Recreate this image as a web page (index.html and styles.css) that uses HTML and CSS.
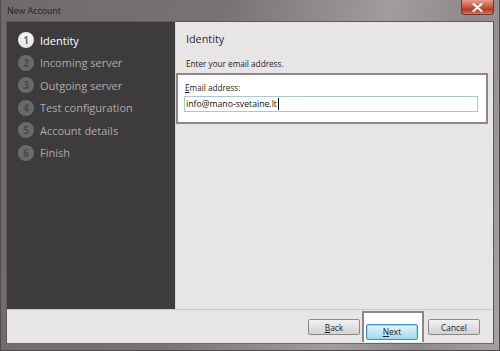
FILE: index.html
```html
<!DOCTYPE html>
<html lang="en">
<head>
<meta charset="UTF-8" />
<title>New Account</title>
<link rel="stylesheet" href="styles.css">
</head>
<body>

<div class="window">
  <div class="titlebar">
    <span class="title">New Account</span>
    <div class="close">
      <svg width="11" height="9" viewBox="0 0 11 9"><path d="M1.5 1 L9.5 8 M9.5 1 L1.5 8" stroke="#fff" stroke-width="2.2" stroke-linecap="round"/></svg>
    </div>
  </div>

  <div class="client">
    <div class="main">
      <ul class="steps">
        <li class="step current"><span class="num">1</span>Identity</li>
        <li class="step"><span class="num">2</span>Incoming server</li>
        <li class="step"><span class="num">3</span>Outgoing server</li>
        <li class="step"><span class="num">4</span>Test configuration</li>
        <li class="step"><span class="num">5</span>Account details</li>
        <li class="step"><span class="num">6</span>Finish</li>
      </ul>

      <div class="page">
        <h2>Identity</h2>
        <p class="hint">Enter your email address.</p>
        <div class="highlight">
          <label class="field-label"><u>E</u>mail address:</label>
          <div class="input">info@mano-svetaine.lt<span class="caret"></span></div>
        </div>
      </div>
    </div>

    <div class="footer">
      <button class="btn"><u>B</u>ack</button>
      <div class="btn-highlight">
        <button class="btn primary"><u>N</u>ext</button>
      </div>
      <button class="btn">Cancel</button>
    </div>
  </div>
</div>

</body>
</html>
```

FILE: styles.css
```css
body {
  margin: 0;
  font-family: "Open Sans", "Noto Sans", sans-serif;
}

.window {
  width: 500px;
  height: 351px;
  box-sizing: border-box;
  padding: 0 5px 6px 5px;
  display: flex;
  flex-direction: column;
  background: linear-gradient(100deg, #6f6b6c 0%, #777374 40%, #a19c9d 70%, #8d8889 85%, #a6a1a2 100%);
  border: 1px solid #4f4b4c;
  border-top: none;
}

.titlebar {
  height: 21px;
  display: flex;
  align-items: flex-start;
}

.title {
  font-size: 8.8px;
  color: #1f1d1e;
  margin: 5px 0 0 1px;
}

.close {
  margin-left: auto;
  width: 33px;
  height: 15px;
  border: 1px solid #6b3a33;
  border-top: none;
  border-radius: 0 0 4px 4px;
  background: linear-gradient(#e69d8c, #c8553f 50%, #b23a24 70%, #d87a5e);
  display: flex;
  align-items: center;
  justify-content: center;
  box-sizing: border-box;
}

.client {
  flex: 1;
  display: flex;
  flex-direction: column;
  border: 1px solid #5d595a;
  border-bottom-color: #6a6667;
  background: #e8e5e6;
}

.main {
  display: flex;
  height: 287px;
  border-bottom: 1px solid #cac7c8;
}

.steps {
  list-style: none;
  margin: 0;
  padding: 7px 0 0 11px;
  width: 168px;
  box-sizing: border-box;
  background-color: #3f3d3e;
  background-image: repeating-conic-gradient(rgba(0,0,0,0.07) 0 25%, transparent 0 50%);
  background-size: 2px 2px;
}

.step {
  display: flex;
  align-items: center;
  height: 22.5px;
  font-size: 11px;
  color: #aeabac;
}

.step.current {
  color: #ffffff;
}

.num {
  width: 16px;
  height: 16px;
  border-radius: 50%;
  background: #6b696a;
  color: #4a4849;
  font-size: 10px;
  font-weight: bold;
  display: flex;
  align-items: center;
  justify-content: center;
  margin-right: 6px;
}

.current .num {
  background: radial-gradient(circle at 50% 35%, #ffffff, #d9d7d8);
  color: #6a6869;
}

.page {
  flex: 1;
  padding: 7px 5px 0 0;
  border-left: 1px solid #d8d5d6;
}

.page h2 {
  font-weight: normal;
  font-size: 10.8px;
  line-height: 20px;
  color: #1f2a3a;
  margin: 0 0 0 10px;
  height: 20px;
}

.hint {
  font-size: 8.2px;
  line-height: 14px;
  color: #1e1e1e;
  margin: 8px 0 0 10px;
  height: 14px;
}

.highlight {
  margin-top: 2px;
  background: #ffffff;
  border: 2px solid #8f8688;
  padding: 5px 8px 10px 6px;
}

.field-label {
  display: block;
  font-size: 8.2px;
  line-height: 15px;
  color: #1e1e1e;
  height: 15px;
  margin-left: 1px;
}

.input {
  height: 16px;
  margin-top: 1px;
  box-sizing: border-box;
  border: 1px solid #a9c6dd;
  font-size: 8.7px;
  line-height: 14px;
  padding-left: 1px;
  color: #111;
  display: flex;
  align-items: center;
}

.caret {
  display: inline-block;
  width: 1px;
  height: 12px;
  background: #000;
  margin-left: 1px;
}

.footer {
  flex: 1;
  display: flex;
  align-items: flex-start;
  justify-content: flex-end;
  padding-right: 13px;
}

.btn {
  font-family: inherit;
  font-size: 8.4px;
  color: #1e1e1e;
  width: 52px;
  height: 16px;
  padding: 0;
  margin-top: 9px;
  border: 1px solid #8d8a8b;
  border-radius: 2px;
  background: linear-gradient(#f3f2f2, #e2e0e1 50%, #d5d2d3);
}

.btn-highlight {
  background: #ffffff;
  border: 2px solid #8f8688;
  border-bottom: none;
  padding: 5px 4px 0 2px;
  margin: 1px 4px 0 2px;
  height: 31px;
  box-sizing: border-box;
}

.btn-highlight .btn {
  margin-top: 0;
}

.btn.primary {
  border-color: #3c8fc7;
  background: linear-gradient(#e6f5fc, #c3e6f7 50%, #a9d9f2);
  box-shadow: inset 0 0 0 1px #8fdaf9;
}
```
